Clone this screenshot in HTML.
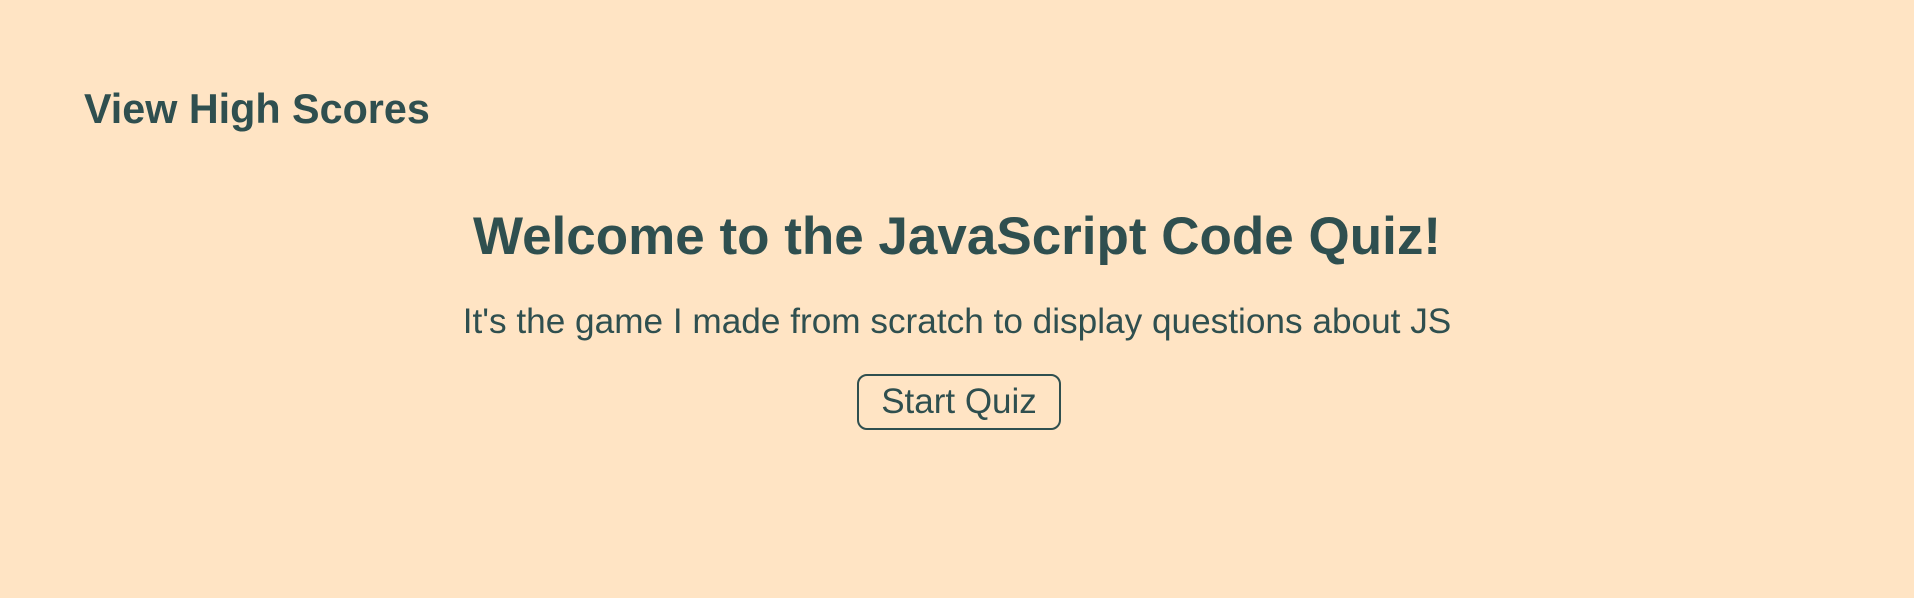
<!DOCTYPE html>
<html><head><meta charset="utf-8"><style>
html,body{margin:0;padding:0;width:1914px;height:598px;background:#ffe4c4;overflow:hidden;font-family:"Liberation Sans",Arial,sans-serif;color:#2f4f4f}
.a{position:absolute;white-space:nowrap;line-height:1}
#hs{left:84px;top:89px;font-size:41.3px;font-weight:bold}
#h1{left:0;width:1914px;text-align:center;top:210px;font-size:53px;font-weight:bold}
#p{left:0;width:1914px;text-align:center;top:304px;font-size:35.2px}
#b{left:857px;top:374px;width:200px;height:52px;border:2px solid #2f4f4f;border-radius:10px;font-size:35px;text-align:center;line-height:52px}
</style></head><body>
<div class="a" id="hs">View High Scores</div>
<div class="a" id="h1">Welcome to the JavaScript Code Quiz!</div>
<div class="a" id="p">It's the game I made from scratch to display questions about JS</div>
<div class="a" id="b">Start Quiz</div>
</body></html>
